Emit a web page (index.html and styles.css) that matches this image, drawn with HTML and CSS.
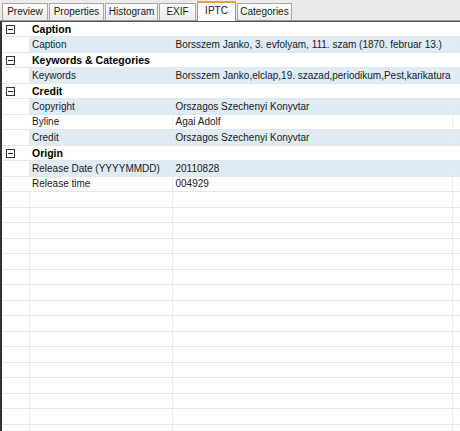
FILE: index.html
```html
<!DOCTYPE html>
<html lang="en">
  <head>
    <meta charset="UTF-8" />
    <title>IPTC</title>
    <link rel="stylesheet" href="styles.css">
  </head>
  <body>
    <div class="tabs">
      <div class="tab tab-preview">Preview</div>
      <div class="tab tab-props">Properties</div>
      <div class="tab tab-hist">Histogram</div>
      <div class="tab tab-exif">EXIF</div>
      <div class="tab tab-iptc active">IPTC</div>
      <div class="tab tab-cat">Categories</div>
    </div>

    <div class="grid">
      <table>
        <colgroup>
          <col class="c-exp">
          <col class="c-name">
          <col class="c-val">
          <col class="c-end">
        </colgroup>
        <tr class="group">
          <td class="exp"><span class="box"></span></td>
          <td class="gname" colspan="2">Caption</td>
          <td></td>
        </tr>
        <tr class="alt">
          <td class="exp"></td><td>Caption</td>
          <td>Borsszem Janko, 3. evfolyam, 111. szam (1870. februar 13.)</td><td></td>
        </tr>
        <tr class="group">
          <td class="exp"><span class="box"></span></td>
          <td class="gname" colspan="2">Keywords &amp; Categories</td>
          <td></td>
        </tr>
        <tr class="alt">
          <td class="exp"></td><td>Keywords</td>
          <td>Borsszem Janko,elclap,19. szazad,periodikum,Pest,karikatura</td><td></td>
        </tr>
        <tr class="group">
          <td class="exp"><span class="box"></span></td>
          <td class="gname" colspan="2">Credit</td>
          <td></td>
        </tr>
        <tr class="alt">
          <td class="exp"></td><td>Copyright</td>
          <td>Orszagos Szechenyi Konyvtar</td><td></td>
        </tr>
        <tr>
          <td class="exp"></td><td>Byline</td>
          <td>Agai Adolf</td><td></td>
        </tr>
        <tr class="alt">
          <td class="exp"></td><td>Credit</td>
          <td>Orszagos Szechenyi Konyvtar</td><td></td>
        </tr>
        <tr class="group">
          <td class="exp"><span class="box"></span></td>
          <td class="gname" colspan="2">Origin</td>
          <td></td>
        </tr>
        <tr class="alt">
          <td class="exp"></td><td>Release Date (YYYYMMDD)</td>
          <td>20110828</td><td></td>
        </tr>
        <tr>
          <td class="exp"></td><td>Release time</td>
          <td>004929</td><td></td>
        </tr>
        <tr class="empty"><td></td><td></td><td></td><td></td></tr>
        <tr class="empty"><td></td><td></td><td></td><td></td></tr>
        <tr class="empty"><td></td><td></td><td></td><td></td></tr>
        <tr class="empty"><td></td><td></td><td></td><td></td></tr>
        <tr class="empty"><td></td><td></td><td></td><td></td></tr>
        <tr class="empty"><td></td><td></td><td></td><td></td></tr>
        <tr class="empty"><td></td><td></td><td></td><td></td></tr>
        <tr class="empty"><td></td><td></td><td></td><td></td></tr>
        <tr class="empty"><td></td><td></td><td></td><td></td></tr>
        <tr class="empty"><td></td><td></td><td></td><td></td></tr>
        <tr class="empty"><td></td><td></td><td></td><td></td></tr>
        <tr class="empty"><td></td><td></td><td></td><td></td></tr>
        <tr class="empty"><td></td><td></td><td></td><td></td></tr>
        <tr class="empty"><td></td><td></td><td></td><td></td></tr>
        <tr class="empty"><td></td><td></td><td></td><td></td></tr>
        <tr class="empty"><td></td><td></td><td></td><td></td></tr>
        <tr class="empty"><td></td><td></td><td></td><td></td></tr>
      </table>
    </div>
  </body>
</html>
```

FILE: styles.css
```css
body {
  margin: 0;
  width: 460px;
  height: 431px;
  overflow: hidden;
  background-color: #fff;
  font-family: "Liberation Sans", Arial, sans-serif;
  font-size: 10px;
  color: #000;
}
.tabs {
  display: flex;
  align-items: flex-end;
  height: 21px;
  padding-left: 2px;
  background-color: #ebebeb;
  border-bottom: 1px solid #919b9c;
  box-sizing: border-box;
}
.tab {
  box-sizing: border-box;
  height: 17px;
  line-height: 16px;
  margin-right: 1px;
  text-align: center;
  background: linear-gradient(#fdfdfd, #ecebe6);
  border: 1px solid #a7a7a7;
  border-bottom: none;
  color: #222;
}
.tab-preview {
  width: 46px;
}
.tab-props {
  width: 55px;
}
.tab-hist {
  width: 53px;
}
.tab-exif {
  width: 37px;
}
.tab-iptc {
  width: 39px;
}
.tab-cat {
  width: 55px;
}
.tab.active {
  height: 20px;
  line-height: 16px;
  background: #fcfcfe;
  border-color: #919b9c;
  border-top: 2px solid #e9a33d;
  margin-bottom: -1px;
}
.grid {
  border-left: 2px solid #333;
  border-top: 1px solid #555;
  height: 410px;
  overflow: hidden;
}
table {
  border-collapse: collapse;
  table-layout: fixed;
  width: 458px;
}
.c-exp {
  width: 27px;
}
.c-name {
  width: 143px;
}
.c-val {
  width: 280px;
}
.c-end {
  width: 8px;
}
td {
  height: 14px;
  padding: 0 0 0 3px;
  border-bottom: 1px solid #e6e6e6;
  border-right: 1px solid #ececec;
  white-space: nowrap;
  overflow: hidden;
  line-height: 14px;
  color: #1a1a1a;
}
tr:nth-child(even) td {
  height: 15px;
}
td.exp {
  border-right: none;
  padding: 0;
}
tr.alt td {
  background-color: #dfebf5;
}
tr.alt td.exp {
  background-color: #fff;
}
tr.group td.gname {
  font-weight: bold;
  font-size: 10.5px;
  color: #000;
  border-right: none;
}
.box {
  display: block;
  width: 9px;
  height: 9px;
  margin-left: 4px;
  border: 1px solid #333;
  box-sizing: border-box;
  position: relative;
  background: #fff;
}
.box::after {
  content: "";
  position: absolute;
  left: 1px;
  right: 1px;
  top: 3px;
  height: 1px;
  background: #222;
}
```
